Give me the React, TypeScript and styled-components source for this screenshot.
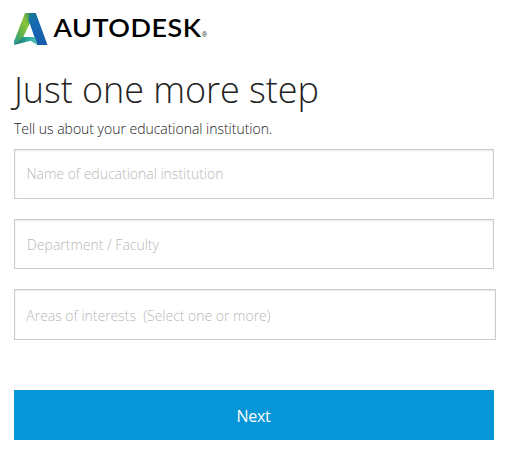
import React from "react";
import styled, { createGlobalStyle } from "styled-components";

const GlobalStyle = createGlobalStyle`
  *, *::before, *::after { box-sizing: border-box; }
  body { margin: 0; background: #fff; overflow: hidden; }
`;

const Page = styled.main`
  width: 509px;
  height: 456px;
  padding: 12px 13px 0 14px;
  background: #fff;
  color: #222;
  font-family: "Open Sans", sans-serif;
  font-weight: 300;
`;

const Logo = styled.svg`
  display: block;
  width: 200px;
  height: 34px;
  overflow: visible;
`;

const Wordmark = styled.text`
  font-family: Lato, sans-serif;
  font-size: 25px;
  font-weight: 600;
  letter-spacing: 0.5px;
  fill: #000;
`;

const Registered = styled.text`
  font-family: "Liberation Sans", sans-serif;
  font-size: 7px;
  fill: #222;
`;

const Title = styled.h1`
  margin: 18px 0 0;
  height: 52px;
  font-size: 36px;
  line-height: 51px;
  font-weight: 300;
  letter-spacing: -0.06px;
  white-space: nowrap;
`;

const Lead = styled.p`
  margin: 3px 0 10px;
  height: 20px;
  font-size: 14px;
  line-height: 20px;
  letter-spacing: -0.025px;
`;

const Form = styled.form`
  display: flex;
  flex-direction: column;
  align-items: flex-start;
`;

const Field = styled.input<{ $width?: number; $height?: number; $gap?: number; $inset?: number; $top?: number; $bottom?: number }>`
  width: ${(p) => p.$width ?? 480}px;
  height: ${(p) => p.$height ?? 50}px;
  margin: 0 0 ${(p) => p.$gap ?? 20}px;
  padding: ${(p) => p.$top ?? 0}px 12px ${(p) => p.$bottom ?? 0}px ${(p) => p.$inset ?? 12}px;
  border: 1px solid #ccc;
  border-radius: 0;
  outline: none;
  background: #fff;
  box-shadow: inset 0 1px 2px rgba(0, 0, 0, 0.1);
  color: #222;
  font: 300 14px "Open Sans", sans-serif;
  letter-spacing: -0.01px;
  &::placeholder { color: #b8b8b8; opacity: 1; }
`;

const Submit = styled.button`
  width: 480px;
  height: 50px;
  padding: 1px 1px 0 0;
  border: 0;
  background: #0696d7;
  color: #fff;
  font: 500 16px "Open Sans", sans-serif;
  letter-spacing: -0.3px;
`;

function AutodeskLogo() {
  return (
    <Logo viewBox="0 0 200 34" role="img" aria-label="Autodesk">
      <defs>
        <linearGradient id="leftLeg" x1="0" y1="0.85" x2="1" y2="0.1">
          <stop offset="0" stopColor="#269b91" />
          <stop offset="0.35" stopColor="#63b345" />
          <stop offset="0.65" stopColor="#8dc33b" />
          <stop offset="1" stopColor="#1d8c62" />
        </linearGradient>
        <linearGradient id="rightLeg" x1="0" y1="0" x2="0.5" y2="1">
          <stop offset="0" stopColor="#167c88" />
          <stop offset="0.4" stopColor="#1769b5" />
          <stop offset="1" stopColor="#175dab" />
        </linearGradient>
        <linearGradient id="fold" x1="0" y1="0" x2="1" y2="0">
          <stop offset="0" stopColor="#166b63" />
          <stop offset="0.5" stopColor="#249d92" />
          <stop offset="1" stopColor="#55c4bb" />
        </linearGradient>
      </defs>
      <path d="M11 1H19L16 11L9 25.5L0 33V29.5Z" fill="url(#leftLeg)" />
      <path d="M15.5 1H21.8L33.5 33H23.2L14.5 8Z" fill="url(#rightLeg)" />
      <path d="M0 33L9 25H20.5L23.2 33L16.5 28.8Z" fill="url(#fold)" />
      <Wordmark x="39.5" y="24.5" textLength="148" lengthAdjust="spacingAndGlyphs">AUTODESK</Wordmark>
      <Registered x="188" y="25">®</Registered>
    </Logo>
  );
}

export default function App() {
  return (
    <>
      <GlobalStyle />
      <Page>
        <AutodeskLogo />
        <Title>Just one more step</Title>
        <Lead>Tell us about your educational institution.</Lead>
        <Form onSubmit={(e: React.FormEvent) => e.preventDefault()}>
          <Field placeholder="Name of educational institution" $inset={11.5} $bottom={2} />
          <Field placeholder="Department / Faculty" />
          <Field placeholder="Areas of interests  (Select one or more)" $width={482} $height={51} $gap={50} $inset={11.3} $top={2} />
          <Submit type="submit">Next</Submit>
        </Form>
      </Page>
    </>
  );
}
